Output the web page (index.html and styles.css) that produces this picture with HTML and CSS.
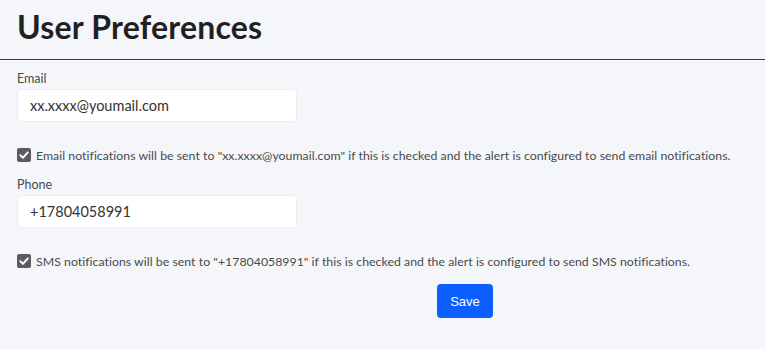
FILE: index.html
```html
<!DOCTYPE html>
<html>
<head>
<meta charset="utf-8">
<link rel="stylesheet" href="styles.css">
</head>
<body>
<header class="page-header">
  <h1 class="title">User Preferences</h1>
</header>
<form class="prefs">
  <div class="field">
    <label class="label">Email</label>
    <div class="input">xx.xxxx@youmail.com</div>
  </div>
  <div class="check-row">
    <span class="checkbox"><svg viewBox="0 0 14 14" width="14" height="14"><path d="M3.3 7.2 L5.9 9.8 L10.8 4.4" fill="none" stroke="#fff" stroke-width="1.9" stroke-linecap="round" stroke-linejoin="round"/></svg></span>
    <span class="check-text">Email notifications will be sent to "xx.xxxx@youmail.com" if this is checked and the alert is configured to send email notifications.</span>
  </div>
  <div class="field">
    <label class="label">Phone</label>
    <div class="input">+17804058991</div>
  </div>
  <div class="check-row">
    <span class="checkbox"><svg viewBox="0 0 14 14" width="14" height="14"><path d="M3.3 7.2 L5.9 9.8 L10.8 4.4" fill="none" stroke="#fff" stroke-width="1.9" stroke-linecap="round" stroke-linejoin="round"/></svg></span>
    <span class="check-text">SMS notifications will be sent to "+17804058991" if this is checked and the alert is configured to send SMS notifications.</span>
  </div>
  <div class="actions">
    <button type="button" class="save">Save</button>
  </div>
</form>
</body>
</html>
```
FILE: styles.css
```css
html, body {
  margin: 0;
  padding: 0;
  background: #f5f6fa;
}
body {
  font-family: Lato, "Open Sans", sans-serif;
  color: #3a3a3a;
  width: 765px;
  height: 349px;
  overflow: hidden;
}
.page-header {
  border-bottom: 1px solid #3b3b3f;
  padding: 8px 17px 0;
  height: 51px;
}
.title {
  margin: 0;
  font-family: Lato, sans-serif;
  font-weight: 700;
  font-size: 32px;
  line-height: 37px;
  color: #1f1f24;
  letter-spacing: 0.2px;
}
.prefs {
  padding: 11px 17px 0;
  display: flex;
  flex-direction: column;
}
.field {
  display: flex;
  flex-direction: column;
}
.label {
  font-size: 12.5px;
  line-height: 16px;
  color: #4a4a4a;
  margin-bottom: 2px;
}
.input {
  height: 33px;
  box-sizing: border-box;
  background: #fff;
  border: 1px solid #ecedf1;
  border-radius: 4px;
  padding: 0 12px;
  display: flex;
  align-items: center;
  font-size: 14.5px;
  color: #333;
  width: 280px;
}
.check-row {
  display: flex;
  align-items: center;
  gap: 5px;
  margin-top: 25px;
  margin-bottom: 14px;
  height: 16px;
}
.checkbox {
  width: 14px;
  height: 14px;
  border-radius: 2px;
  background: #5b5b63;
  display: flex;
  flex: none;
}
.check-text {
  font-size: 12.3px;
  letter-spacing: 0.03px;
  color: #4a4a4a;
  white-space: nowrap;
}
.actions {
  padding-left: 420px;
  margin-top: 1px;
}
.save {
  width: 56px;
  height: 34px;
  border: none;
  border-radius: 4px;
  background: #0b5fff;
  color: #fff;
  font-family: "Liberation Sans", Arial, sans-serif;
  font-size: 13px;
  padding: 0;
}
```
